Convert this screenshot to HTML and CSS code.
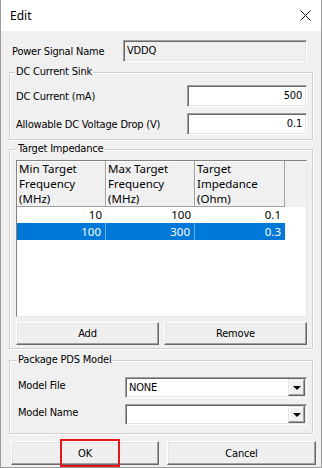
FILE: index.html
```html
<!DOCTYPE html>
<html lang="en">
<head>
  <meta charset="UTF-8" />
  <title>Edit</title>
  <link rel="stylesheet" href="styles.css">
</head>
<body>
  <div class="dialog">
    <div class="titlebar">
      <span>Edit</span>
      <svg class="close" width="11" height="11" viewBox="0 0 11 11">
        <path d="M0.5 0.5 L10.5 10.5 M10.5 0.5 L0.5 10.5" stroke="#111" stroke-width="1" fill="none"/>
      </svg>
    </div>

    <div class="content">
      <div class="signal-row">
        <span class="label">Power Signal Name</span>
        <div class="field disabled">VDDQ</div>
      </div>

      <fieldset class="group dc">
        <legend>DC Current Sink</legend>
        <div class="dc-row">
          <span class="label">DC Current (mA)</span>
          <div class="field value">500</div>
        </div>
        <div class="dc-row">
          <span class="label">Allowable DC Voltage Drop (V)</span>
          <div class="field value">0.1</div>
        </div>
      </fieldset>

      <fieldset class="group impedance">
        <legend>Target Impedance</legend>
        <div class="list">
          <div class="list-head">
            <div class="head-cell">Min Target<br>Frequency<br>(MHz)</div>
            <div class="head-cell">Max Target<br>Frequency<br>(MHz)</div>
            <div class="head-cell">Target<br>Impedance<br>(Ohm)</div>
            <div class="head-rest"></div>
          </div>
          <div class="list-row">
            <div class="cell">10</div>
            <div class="cell">100</div>
            <div class="cell">0.1</div>
          </div>
          <div class="list-row selected">
            <div class="cell">100</div>
            <div class="cell">300</div>
            <div class="cell">0.3</div>
          </div>
        </div>
        <div class="btn-row">
          <button class="btn">Add</button>
          <button class="btn">Remove</button>
        </div>
      </fieldset>

      <fieldset class="group package">
        <legend>Package PDS Model</legend>
        <div class="pkg-row">
          <span class="label">Model File</span>
          <div class="combo">
            <span class="combo-text">NONE</span>
            <span class="drop"><span class="arrow"></span></span>
          </div>
        </div>
        <div class="pkg-row">
          <span class="label">Model Name</span>
          <div class="combo">
            <span class="combo-text"></span>
            <span class="drop"><span class="arrow"></span></span>
          </div>
        </div>
      </fieldset>

      <div class="footer">
        <button class="btn big ok">OK</button>
        <button class="btn big">Cancel</button>
      </div>
    </div>
  </div>
</body>
</html>
```

FILE: styles.css
```css
* {
  box-sizing: border-box;
}
body {
  margin: 0;
  background: #f0f0f0;
  font-family: "DejaVu Sans Condensed", "Liberation Sans", Arial, sans-serif;
  font-size: 11px;
  letter-spacing: -0.2px;
  color: #000;
}
.dialog {
  width: 322px;
  height: 468px;
  border: 1px solid #9b9b9b;
  border-top: none;
  background: #f0f0f0;
  display: flex;
  flex-direction: column;
}
.titlebar {
  height: 31px;
  flex: none;
  background: #fff;
  display: flex;
  align-items: center;
  justify-content: space-between;
  padding: 0 10px 0 9px;
  font-family: "Noto Sans", "Open Sans", sans-serif;
  font-size: 12px;
  letter-spacing: 0;
}
.close {
  display: block;
}
.content {
  padding: 0 8px;
}
.label {
  white-space: nowrap;
}
.signal-row {
  display: flex;
  align-items: center;
  justify-content: space-between;
  height: 22px;
  margin-top: 9px;
  padding: 0 6px 0 3px;
}
.field {
  height: 22px;
  line-height: 20px;
  background: #fff;
  border: 1px solid;
  border-color: #a0a0a0 #fff #fff #a0a0a0;
  box-shadow: inset 1px 1px 0 #696969, inset -1px -1px 0 #e3e3e3;
}
.field.disabled {
  width: 184px;
  background: #f0f0f0;
  padding-left: 3px;
}
.field.value {
  width: 120px;
  text-align: right;
  padding-right: 4px;
}
.group {
  margin: 0;
  min-width: 0;
  border: 1px solid #d0d0d0;
  box-shadow: inset 1px 1px 0 #fff, 1px 1px 0 #fff;
}
.group legend {
  line-height: 14px;
  padding: 0 1px;
  margin-left: -1px;
}
.dc {
  margin-top: 3px;
  padding: 6px 5px 4px 6px;
}
.dc-row {
  display: flex;
  align-items: center;
  justify-content: space-between;
  height: 22px;
}
.dc-row + .dc-row {
  margin-top: 6px;
}
.impedance {
  margin-top: 2px;
  padding: 4px 5px 3px 6px;
}
.impedance legend {
  margin-left: 1px;
}
.list {
  height: 157px;
  background: #fff;
  border: 1px solid;
  border-color: #828282 #e8e8e8 #e8e8e8 #828282;
  font-family: "Noto Sans", "Open Sans", sans-serif;
  font-size: 11.5px;
  letter-spacing: 0;
}
.list-head,
.list-row {
  display: grid;
  grid-template-columns: 89px 89px 90px 1fr;
}
.list-head {
  height: 45px;
}
.head-cell {
  background: #f0f0f0;
  border-right: 1px solid #a0a0a0;
  border-bottom: 1px solid #a0a0a0;
  box-shadow: inset 1px 1px 0 #fff;
  padding: 0 2px;
  line-height: 15px;
}
.head-rest {
  background: #f0f0f0;
}
.list-row {
  height: 17px;
  line-height: 17px;
}
.cell {
  text-align: right;
  padding-right: 4px;
}
.selected .cell {
  background: #0078d7;
  color: #fff;
  border-right: 1px solid #6aaee6;
}
.selected .cell:last-child {
  border-right: none;
}
.btn-row {
  display: grid;
  grid-template-columns: 1fr 1fr;
  gap: 5px;
  margin-top: 5px;
}
.btn {
  height: 23px;
  font-family: inherit;
  font-size: 11px;
  letter-spacing: inherit;
  color: #000;
  background: #efefef;
  border: 1px solid;
  border-color: #fff #696969 #696969 #fff;
  box-shadow: inset -1px -1px 0 #a0a0a0, inset 1px 1px 0 #e3e3e3;
  padding: 0;
}
.package {
  margin-top: 4px;
  padding: 10px 5px 8px 8px;
}
.package legend {
  margin-left: -1px;
}
.pkg-row {
  display: flex;
  align-items: center;
  justify-content: space-between;
  height: 21px;
}
.pkg-row .label {
  margin-top: -4px;
}
.pkg-row + .pkg-row {
  margin-top: 6px;
}
.combo {
  width: 182px;
  height: 21px;
  display: flex;
  background: #fff;
  border: 1px solid;
  border-color: #a0a0a0 #fff #fff #a0a0a0;
  box-shadow: inset 1px 1px 0 #696969, inset -1px -1px 0 #e3e3e3;
  padding: 1px;
}
.combo-text {
  flex: 1;
  line-height: 18px;
  padding-left: 2px;
}
.drop {
  width: 17px;
  height: 17px;
  background: #f0f0f0;
  border: 1px solid;
  border-color: #e3e3e3 #696969 #696969 #e3e3e3;
  box-shadow: inset -1px -1px 0 #a0a0a0, inset 1px 1px 0 #fff;
  display: flex;
  align-items: center;
  justify-content: center;
}
.arrow {
  width: 0;
  height: 0;
  border-left: 4px solid transparent;
  border-right: 4px solid transparent;
  border-top: 4px solid #000;
  margin-top: 1px;
}
.footer {
  display: grid;
  grid-template-columns: 148px 149px;
  gap: 8px;
  margin: 7px -4px 0 2px;
}
.btn.big {
  height: 24px;
}
.ok {
  position: relative;
}
.ok::after {
  content: "";
  position: absolute;
  left: 48px;
  top: -3px;
  width: 56px;
  height: 24px;
  border: 2px solid #e8141c;
}
```
